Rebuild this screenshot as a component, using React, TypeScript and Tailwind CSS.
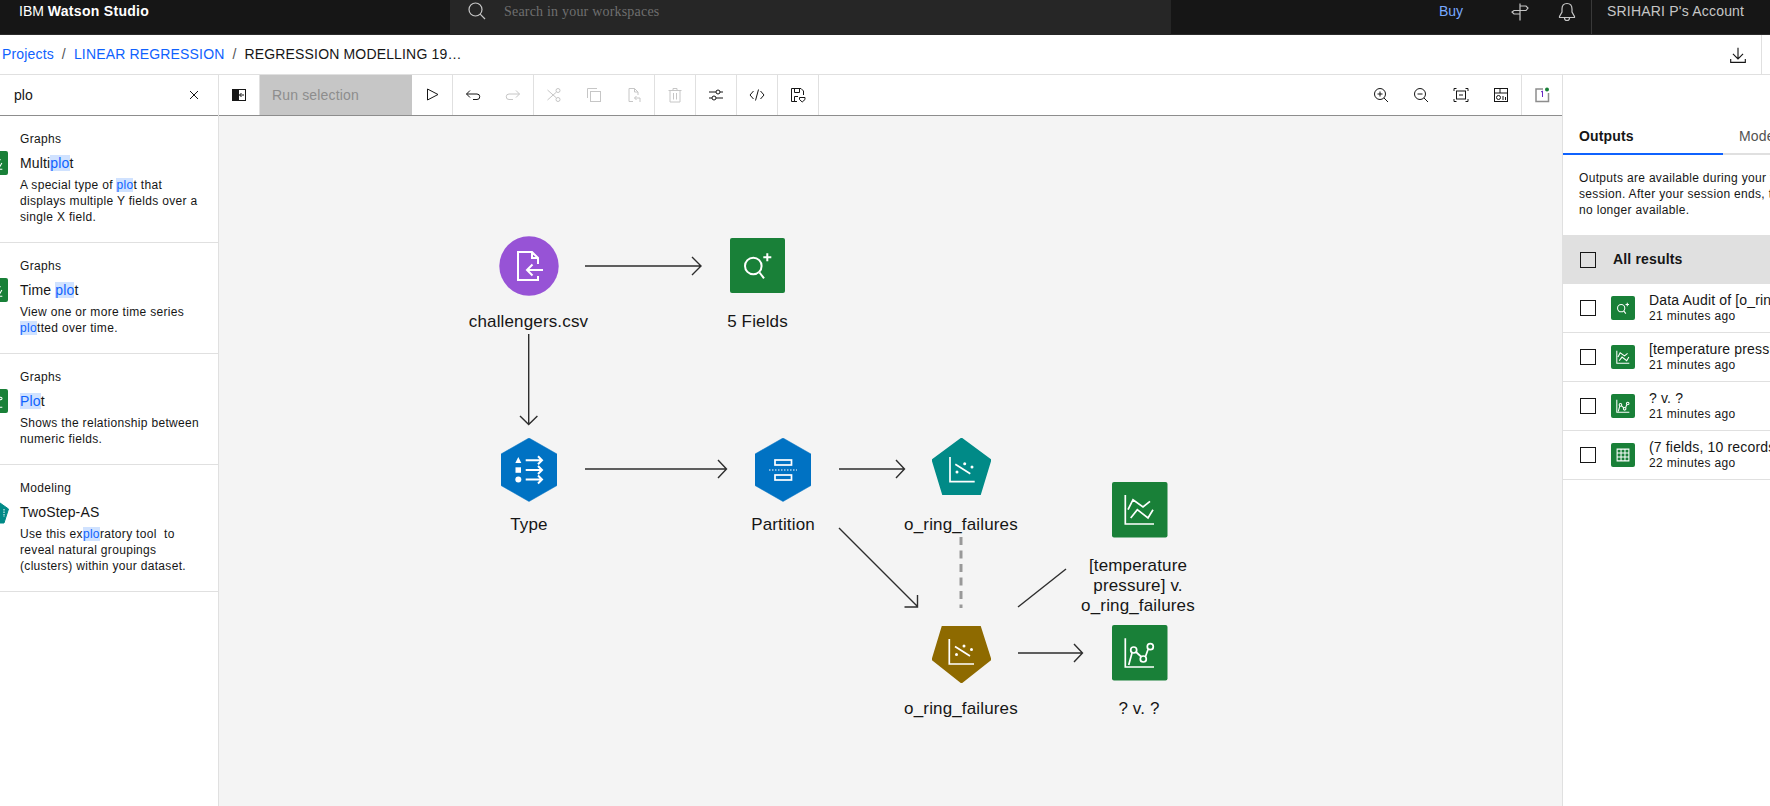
import type { ReactNode } from 'react'

// Small toolbar icons share one 16px box
function Ico({ children, size = 16, className = 'text-[#161616]' }: { children: ReactNode; size?: number; className?: string }) {
  return (
    <svg width={size} height={size} viewBox="0 0 16 16" fill="none" stroke="currentColor" strokeWidth="1" className={className}>
      {children}
    </svg>
  )
}

function ToolBtn({ children }: { children: ReactNode }) {
  return <div className="w-10 h-full grid place-items-center">{children}</div>
}

function Hl({ children }: { children: ReactNode }) {
  return <span className="bg-[#d0e2ff] text-[#0f62fe]">{children}</span>
}

const disabled = 'text-[#c6c6c6]'

// Glyphs drawn in a 55px box, reused by canvas nodes and the small list icons
function FieldsGlyph() {
  return (
    <>
      <circle cx="23.3" cy="28" r="8.3" />
      <path d="M29.5 34.5L34 40.3M37.3 15.3v8M33.3 19.3h8" />
    </>
  )
}
function LinesGlyph() {
  return <path d="M13.3 13V42H42M16 27.7L21 17.7L31 25L38 19.3M18.7 36L25.3 27.7L36 36L41 27.7" />
}
function PlotGlyph() {
  return (
    <>
      <path d="M13.3 13.3V42H42M16.7 40L20 28M24 27L29.5 32M33.5 31.5L36 24.5" />
      <circle cx="21.7" cy="25" r="3" />
      <circle cx="31.3" cy="34" r="3" />
      <circle cx="38.3" cy="21.7" r="3" />
    </>
  )
}
function TableGlyph() {
  return <path d="M14 14H41V41H14ZM14 23H41M14 32H41M23 14V41M32 14V41" />
}

function GreenIcon({ children, strokeWidth = 2.4 }: { children: ReactNode; strokeWidth?: number }) {
  return (
    <div className="w-6 h-6 rounded-[2px] bg-[#198038] shrink-0">
      <svg width="24" height="24" viewBox="0 0 55 55" fill="none" stroke="white" strokeWidth={strokeWidth}>
        {children}
      </svg>
    </div>
  )
}

function PaletteItem({ group, title, icon, children }: { group: string; title: ReactNode; icon: ReactNode; children: ReactNode }) {
  return (
    <div className="relative pl-5 pr-2 pt-[15px] pb-[17px] border-b border-[#e0e0e0]">
      <div className="text-[12px] leading-4 tracking-[0.32px] text-[#161616]">{group}</div>
      <div className="mt-[6px] text-[14px] leading-[20px] tracking-[0.16px] text-[#161616]">{title}</div>
      <div className="mt-[4px] text-[12px] leading-4 tracking-[0.32px] text-[#161616]">{children}</div>
      <div className="absolute left-[-16.5px] top-[35px]">{icon}</div>
    </div>
  )
}

function OutputRow({ title, time, icon }: { title: string; time: string; icon: ReactNode }) {
  return (
    <div className="h-[49px] pl-[17px] flex items-center border-b border-[#e0e0e0]">
      <div className="w-4 h-4 border border-[#161616] shrink-0" />
      <div className="ml-[15px]">{icon}</div>
      <div className="ml-[14px] whitespace-nowrap">
        <div className="text-[14px] leading-4 tracking-[0.16px] text-[#161616]">{title}</div>
        <div className="text-[12px] leading-4 tracking-[0.32px] text-[#161616]">{time}</div>
      </div>
    </div>
  )
}

function NodeLabel({ className, children }: { className: string; children: ReactNode }) {
  return <div className={`absolute w-[200px] text-center text-[17px] leading-5 tracking-[0.15px] text-[#161616] ${className}`}>{children}</div>
}

function Arrow({ d }: { d: string }) {
  return <path d={d} fill="none" stroke="#2d2d2d" strokeWidth="1.4" />
}

function Canvas() {
  return (
    <div className="relative flex-1 bg-[#f4f4f4] overflow-hidden">
      {/* links */}
      <svg width="1343" height="690" className="absolute left-0 top-0" fill="none">
        <Arrow d="M366 150H482M473 141L482 150L473 159" />
        <Arrow d="M309.7 218V308.5M301 300L309.7 308.5L318.400 300" />
        <Arrow d="M366 353H507.500M499 344L507.500 353L499 362" />
        <Arrow d="M620 353H685.500M677 344L685.500 353L677 362" />
        <Arrow d="M620 412L698.500 490.500M685.500 491H698.500V479" />
        <Arrow d="M799 491L847 453" />
        <Arrow d="M799 537H863.500M855 528L863.500 537L855 546" />
        <path d="M742 421V492" stroke="#999" strokeWidth="3" strokeDasharray="8 5.500" />
      </svg>

      {/* challengers.csv */}
      <svg width="60" height="60" className="absolute left-[280px] top-[120px]" fill="none" stroke="white" strokeWidth="2">
        <circle cx="30" cy="30" r="29.7" fill="#9753d6" stroke="none" />
        <path d="M39 28V22L33 16H19V44H39V40M33 16V22H39M44 34H28M33.500 28.500L28 34L33.500 39.500" />
      </svg>
      <NodeLabel className="left-[209.500px] top-[196px]">challengers.csv</NodeLabel>

      {/* 5 Fields */}
      <svg width="55" height="55" className="absolute left-[511px] top-[122px]" fill="none" stroke="white" strokeWidth="2">
        <rect width="55" height="55" rx="2" fill="#198038" stroke="none" />
        <FieldsGlyph />
      </svg>
      <NodeLabel className="left-[438.500px] top-[196px]">5 Fields</NodeLabel>

      {/* Type */}
      <svg width="56" height="64" className="absolute left-[282px] top-[322px]" fill="none" stroke="white" strokeWidth="2">
        <path d="M28 0L56 16V47.500L28 63.500L0 47.500V16Z" fill="#0072c3" stroke="#0072c3" strokeLinejoin="round" strokeWidth="0.5" />
        <path d="M17.300 19L20.300 25H14.300Z" fill="white" stroke="none" />
        <rect x="14.500" y="29.300" width="5.500" height="5.500" fill="white" stroke="none" />
        <circle cx="17.300" cy="41.500" r="3" fill="white" stroke="none" />
        <path d="M24.700 22.300H41M37 18.300L41 22.300L37 26.300M24.700 32H41M37 28L41 32L37 36M24.700 41.500H41M37 37.500L41 41.500L37 45.500" />
      </svg>
      <NodeLabel className="left-[210px] top-[399px]">Type</NodeLabel>

      {/* Partition */}
      <svg width="56" height="64" className="absolute left-[536px] top-[322px]" fill="none" stroke="white" strokeWidth="1.700">
        <path d="M28 0L56 16V47.500L28 63.500L0 47.500V16Z" fill="#0072c3" stroke="#0072c3" strokeLinejoin="round" strokeWidth="0.5" />
        <rect x="20" y="22" width="16.500" height="5" />
        <rect x="20" y="37" width="16.500" height="5" />
        <path d="M14 32H42" strokeDasharray="1.500 1.500" strokeWidth="1.200" />
      </svg>
      <NodeLabel className="left-[464px] top-[399px]">Partition</NodeLabel>

      {/* teal modeling node */}
      <svg width="59" height="57" className="absolute left-[713px] top-[322px]" fill="none" stroke="white" strokeWidth="1.700">
        <path d="M29.500 0.500L58.500 22L48 56.500H11L0.500 22Z" fill="#008a87" stroke="#008a87" strokeLinejoin="round" />
        <path d="M18 19V43.700H42.700M23.300 26.300L38.300 35.700" />
        <circle cx="25" cy="34" r="1.500" fill="white" stroke="none" />
        <circle cx="32.700" cy="25.700" r="1.500" fill="white" stroke="none" />
        <circle cx="40" cy="29" r="1.500" fill="white" stroke="none" />
      </svg>
      <NodeLabel className="left-[642px] top-[399px]">o_ring_failures</NodeLabel>

      {/* temperature chart */}
      <svg width="56" height="56" className="absolute left-[893px] top-[366px]" fill="none" stroke="white" strokeWidth="1.700">
        <rect width="55.500" height="55.500" rx="2" fill="#198038" stroke="none" />
        <LinesGlyph />
      </svg>
      <NodeLabel className="left-[819px] top-[440px]">
        [temperature
        <br />
        pressure] v.
        <br />
        o_ring_failures
      </NodeLabel>

      {/* gold model nugget */}
      <svg width="59" height="57" className="absolute left-[713px] top-[510px]" fill="none" stroke="white" strokeWidth="1.700">
        <path d="M10.500 0.500H48L58.500 33.500L29.500 56.500L0.500 33.500Z" fill="#8e6a00" stroke="#8e6a00" strokeLinejoin="round" />
        <path d="M17.300 13V38H42M23 20.500L38 30" />
        <circle cx="24.500" cy="28.500" r="1.500" fill="white" stroke="none" />
        <circle cx="32" cy="20" r="1.500" fill="white" stroke="none" />
        <circle cx="39.500" cy="23.500" r="1.500" fill="white" stroke="none" />
      </svg>
      <NodeLabel className="left-[642px] top-[583px]">o_ring_failures</NodeLabel>

      {/* ? v. ? */}
      <svg width="56" height="56" className="absolute left-[893px] top-[509px]" fill="none" stroke="white" strokeWidth="1.700">
        <rect width="55.500" height="55.500" rx="2" fill="#198038" stroke="none" />
        <PlotGlyph />
      </svg>
      <NodeLabel className="left-[820px] top-[583px]">? v. ?</NodeLabel>
    </div>
  )
}

export default function App() {
  return (
    <div className="w-[1770px] h-[806px] overflow-hidden flex flex-col bg-white font-['Liberation_Sans',Arial,sans-serif]">
      {/* top bar */}
      <div className="h-[35px] shrink-0 bg-[#161616] border-b border-[#2b2b2b] flex items-start">
        <div className="w-[450px] pl-[19px] pt-[1px] text-[14px] leading-5 text-white">
          IBM <span className="font-bold tracking-[0.3px]">Watson Studio</span>
        </div>
        <div className="w-[721px] h-[35px] bg-[#262626] flex items-center gap-[18px] pl-[18px] pb-[13px]">
          <svg width="18" height="18" viewBox="0 0 18 18" fill="none" stroke="#c6c6c6" strokeWidth="1.200">
            <circle cx="7.500" cy="7.500" r="6.500" />
            <path d="M12.200 12.200L17 17" />
          </svg>
          <span className="font-['Liberation_Serif',serif] text-[14px] tracking-[0.2px] text-[#6f6f6f]">Search in your workspaces</span>
        </div>
        <div className="ml-[268px] pt-[1px] w-[72px] text-[14px] leading-5 text-[#78a9ff]">Buy</div>
        <div className="w-[32px] pt-[3px]">
          <svg width="18" height="18" viewBox="0 0 18 18" fill="none" stroke="#c6c6c6" strokeWidth="1.200">
            <path d="M9 0.500V17.500M9 3H15L17 5L15 7.500H3L1 9L3 11H9" />
          </svg>
        </div>
        <div className="ml-[15px] pt-[2px]">
          <svg width="18" height="20" viewBox="0 0 18 20" fill="none" stroke="#c6c6c6" strokeWidth="1.200">
            <path d="M9 1.500C5.500 1.500 4 4 4 7V10L1.500 14.500V15.500H16.500V14.500L14 10V7C14 4 12.500 1.500 9 1.500ZM6.500 16A2.500 2.500 0 0 0 11.500 16" />
          </svg>
        </div>
        <div className="ml-[15px] w-px h-[34px] bg-[#393939]" />
        <div className="ml-[15px] pt-[1px] text-[14px] leading-5 tracking-[0.2px] text-[#c6c6c6] whitespace-nowrap">SRIHARI P's Account</div>
      </div>

      {/* breadcrumb */}
      <div className="h-10 shrink-0 flex items-center border-b border-[#e0e0e0] pl-[2px] text-[14px] tracking-[0.16px]">
        <span className="text-[#0f62fe]">Projects</span>
        <span className="mx-[8px] text-[#525252]">/</span>
        <span className="text-[#0f62fe]">LINEAR REGRESSION</span>
        <span className="mx-[8px] text-[#525252]">/</span>
        <span className="text-[#161616]">REGRESSION MODELLING 19…</span>
        <div className="ml-auto w-[49px] h-full flex items-center justify-center pl-[3px]">
          <Ico size={18}>
            <path d="M8 1.500V11M3.500 7L8 11.500L12.500 7M1.500 11.500V14.500H14.500V11.500" />
          </Ico>
        </div>
        <div className="w-px h-full bg-[#e0e0e0] mr-2" />
      </div>

      <div className="flex-1 flex min-h-0">
        {/* node palette */}
        <div className="w-[219px] shrink-0 border-r border-[#e0e0e0] overflow-hidden">
          <div className="h-[41px] flex items-center justify-between pl-[14px] pr-[18px] border-b border-[#8d8d8d]">
            <span className="text-[14px] text-[#161616]">plo</span>
            <svg width="12" height="12" viewBox="0 0 12 12" fill="none" stroke="#161616" strokeWidth="1">
              <path d="M2 2L10 10M10 2L2 10" />
            </svg>
          </div>
          <PaletteItem
            group="Graphs"
            title={<>Multi<Hl>plo</Hl>t</>}
            icon={<GreenIcon><LinesGlyph /></GreenIcon>}
          >
            A special type of <Hl>plo</Hl>t that
            <br />
            displays multiple Y fields over a
            <br />
            single X field.
          </PaletteItem>
          <PaletteItem
            group="Graphs"
            title={<>Time <Hl>plo</Hl>t</>}
            icon={<GreenIcon><LinesGlyph /></GreenIcon>}
          >
            View one or more time series
            <br />
            <Hl>plo</Hl>tted over time.
          </PaletteItem>
          <PaletteItem
            group="Graphs"
            title={<><Hl>Plo</Hl>t</>}
            icon={<GreenIcon><PlotGlyph /></GreenIcon>}
          >
            Shows the relationship between
            <br />
            numeric fields.
          </PaletteItem>
          <PaletteItem
            group="Modeling"
            title="TwoStep-AS"
            icon={
              <svg width="25" height="24" viewBox="0 0 25 24" fill="none" stroke="white" strokeWidth="1">
                <path d="M12.500 0.500L24.500 9L20 23H5L0.500 9Z" fill="#008a87" stroke="#008a87" strokeLinejoin="round" />
                <path d="M20 9V17" strokeDasharray="1.500 1" />
              </svg>
            }
          >
            Use this ex<Hl>plo</Hl>ratory tool&nbsp; to
            <br />
            reveal natural groupings
            <br />
            (clusters) within your dataset.
          </PaletteItem>
        </div>

        {/* flow editor */}
        <div className="w-[1343px] shrink-0 flex flex-col">
          <div className="h-[41px] shrink-0 flex border-b border-[#8d8d8d]">
            <div className="w-[41px] border-r border-[#e0e0e0] grid place-items-center">
              <svg width="16" height="14" viewBox="0 0 16 14" fill="none" stroke="#161616" strokeWidth="1">
                <rect x="1.500" y="1.500" width="13" height="11" />
                <rect x="1.500" y="1.500" width="6" height="11" fill="#161616" />
                <path d="M13 7H8.500M10.500 5L8.500 7L10.500 9" />
              </svg>
            </div>
            <div className="w-[152px] bg-[#c6c6c6] flex items-center pl-3 text-[14px] tracking-[0.16px] text-[#8d8d8d]">Run selection</div>
            <div className="w-[41px] border-r border-[#e0e0e0] grid place-items-center">
              <Ico><path d="M3.500 2L14 7.500L3.500 13Z" /></Ico>
            </div>
            <div className="flex border-r border-[#e0e0e0]">
              <ToolBtn><Ico><path d="M5 3.500L1.500 7L5 10.500M1.500 7H12A2.500 2.500 0 0 1 12 12.500H8" /></Ico></ToolBtn>
              <ToolBtn><Ico className={disabled}><path d="M11 3.500L14.500 7L11 10.500M14.500 7H4A2.500 2.500 0 0 0 4 12.500H8" /></Ico></ToolBtn>
            </div>
            <div className="flex border-r border-[#e0e0e0]">
              <ToolBtn>
                <Ico className={disabled}>
                  <circle cx="12" cy="3.500" r="2" />
                  <circle cx="12" cy="12.500" r="2" />
                  <path d="M1.500 3L10.500 11M1.500 13L10.500 5" />
                </Ico>
              </ToolBtn>
              <ToolBtn>
                <Ico className={disabled}>
                  <rect x="4.500" y="4.500" width="10" height="10" />
                  <path d="M1.500 11V1.500H11" />
                </Ico>
              </ToolBtn>
              <ToolBtn>
                <Ico className={disabled}>
                  <path d="M7 14.500H3V1.500H8.500L12 5V8M8.500 1.500V5H12M14 11H8.500M10.500 9L8.500 11L10.500 13M14 11V15" />
                </Ico>
              </ToolBtn>
            </div>
            <div className="w-[41px] border-r border-[#e0e0e0] grid place-items-center">
              <Ico className={disabled}><path d="M1.500 3.500H14.500M6 3.500V1.500H10V3.500M3 3.500V15H13V3.500M6.500 6V12.500M9.500 6V12.500" /></Ico>
            </div>
            <div className="w-[41px] border-r border-[#e0e0e0] grid place-items-center">
              <Ico>
                <path d="M1 5H8M12 5H15M1 11H4M8 11H15" />
                <circle cx="10" cy="5" r="2" />
                <circle cx="6" cy="11" r="2" />
              </Ico>
            </div>
            <div className="w-[41px] border-r border-[#e0e0e0] grid place-items-center">
              <Ico><path d="M4.500 4L1 8L4.500 12M11.500 4L15 8L11.500 12M9.500 2.500L6.500 13.500" /></Ico>
            </div>
            <div className="w-[41px] border-r border-[#e0e0e0] grid place-items-center">
              <Ico>
                <path d="M7 14.500H1.500V1.500H11L13.500 4V8M4.500 1.500V5.500H9.500V1.500M4.500 14.500V9.500H8" />
                <path d="M9.500 10.500H15V12.500L12.200 15L9.500 12.500Z" />
              </Ico>
            </div>
            <div className="ml-auto flex border-r border-[#e0e0e0]">
              <ToolBtn>
                <Ico>
                  <circle cx="7" cy="7" r="5.500" />
                  <path d="M11 11L15 15M7 4.500V9.500M4.500 7H9.500" />
                </Ico>
              </ToolBtn>
              <ToolBtn>
                <Ico>
                  <circle cx="7" cy="7" r="5.500" />
                  <path d="M11 11L15 15M4.500 7H9.500" />
                </Ico>
              </ToolBtn>
              <ToolBtn>
                <Ico>
                  <path d="M1 4V1.500H3.500M12.500 1.500H15V4M1 12V14.500H3.500M12.500 14.500H15V12" />
                  <rect x="3.500" y="4" width="9" height="8" />
                  <path d="M6 8H10" />
                </Ico>
              </ToolBtn>
              <ToolBtn>
                <Ico>
                  <rect x="1.500" y="1.500" width="13" height="13" />
                  <path d="M1.500 6H14.500M7 1.500V6M10 9V13M12.500 10V13" />
                  <circle cx="5.500" cy="10.500" r="2" />
                </Ico>
              </ToolBtn>
            </div>
            <div className="w-10 grid place-items-center">
              <svg width="16" height="16" viewBox="0 0 16 16" fill="none">
                <path d="M9 2H2V14.500H14.500V6" stroke="#8d8d8d" strokeWidth="1.500" />
                <path d="M7 5L8.500 4V10" stroke="#6929c4" strokeWidth="1" />
                <circle cx="13" cy="2.500" r="2" fill="#198038" />
              </svg>
            </div>
          </div>
          <Canvas />
        </div>

        {/* outputs panel */}
        <div className="w-[208px] shrink-0 border-l border-[#e0e0e0] overflow-hidden">
          <div className="pt-[51px] flex whitespace-nowrap text-[14px] leading-5 tracking-[0.16px]">
            <div className="w-40 shrink-0 pl-4 pb-[7px] font-bold text-[#161616] border-b-2 border-[#0f62fe]">Outputs</div>
            <div className="flex-1 pl-4 pb-[7px] text-[#525252] border-b-2 border-[#e0e0e0]">Models</div>
          </div>
          <div className="pl-4 pt-[15px] pb-[17px] text-[12px] leading-4 tracking-[0.32px] text-[#161616] whitespace-nowrap">
            Outputs are available during your flow
            <br />
            session. After your session ends, they are
            <br />
            no longer available.
          </div>
          <div className="h-[49px] bg-[#e0e0e0] pl-[17px] flex items-center">
            <div className="w-4 h-4 border border-[#161616]" />
            <span className="ml-[17px] text-[14px] font-bold tracking-[0.16px] text-[#161616]">All results</span>
          </div>
          <OutputRow title="Data Audit of [o_ring_failures]" time="21 minutes ago" icon={<GreenIcon><FieldsGlyph /></GreenIcon>} />
          <OutputRow title="[temperature pressure] v." time="21 minutes ago" icon={<GreenIcon><LinesGlyph /></GreenIcon>} />
          <OutputRow title="? v. ?" time="21 minutes ago" icon={<GreenIcon><PlotGlyph /></GreenIcon>} />
          <OutputRow title="(7 fields, 10 records)" time="22 minutes ago" icon={<GreenIcon><TableGlyph /></GreenIcon>} />
        </div>
      </div>
    </div>
  )
}
